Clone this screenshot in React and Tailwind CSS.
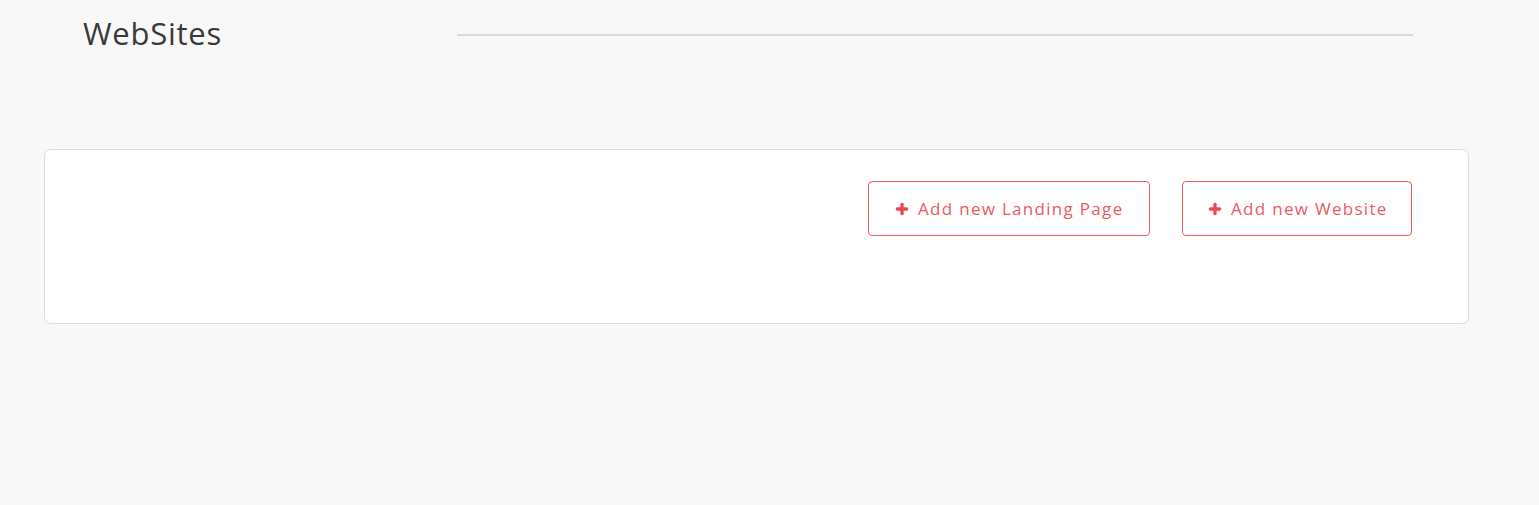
import { Plus } from 'lucide-react';

export default function App() {
  return (
    <div
      className="min-h-[505px] bg-[#f8f8f8]"
      style={{ fontFamily: '"Open Sans", "Noto Sans", sans-serif' }}
    >
      {/* Header */}
      <div className="flex items-center pt-[12px] pl-[83px]">
        <h1 className="w-[374px] text-[31px] leading-[42px] font-normal text-[#3a3a3a] tracking-[0.75px]">
          WebSites
        </h1>
        <div className="w-[956px] h-[2px] bg-[#dadada] mt-[4px]" />
      </div>

      {/* Card */}
      <div className="mt-[95px] ml-[44px] w-[1425px] h-[175px] bg-white border border-[#dcdcdc] rounded-[7px]">
        <div className="flex justify-end gap-[32px] pt-[31px] pr-[56px]">
          <button className="flex items-center h-[55px] w-[282px] pl-[25px] border border-[#ec5a5f] rounded-[4px] text-[#ec5a5f] text-[17px] tracking-[1.3px]">
            <Plus className="w-[16px] h-[16px] mr-[8px] text-[#e84a52]" strokeWidth={5} />
            Add new Landing Page
          </button>
          <button className="flex items-center h-[55px] w-[230px] pl-[24px] border border-[#ec5a5f] rounded-[4px] text-[#ec5a5f] text-[17px] tracking-[1.3px]">
            <Plus className="w-[16px] h-[16px] mr-[8px] text-[#e84a52]" strokeWidth={5} />
            Add new Website
          </button>
        </div>
      </div>
    </div>
  );
}
